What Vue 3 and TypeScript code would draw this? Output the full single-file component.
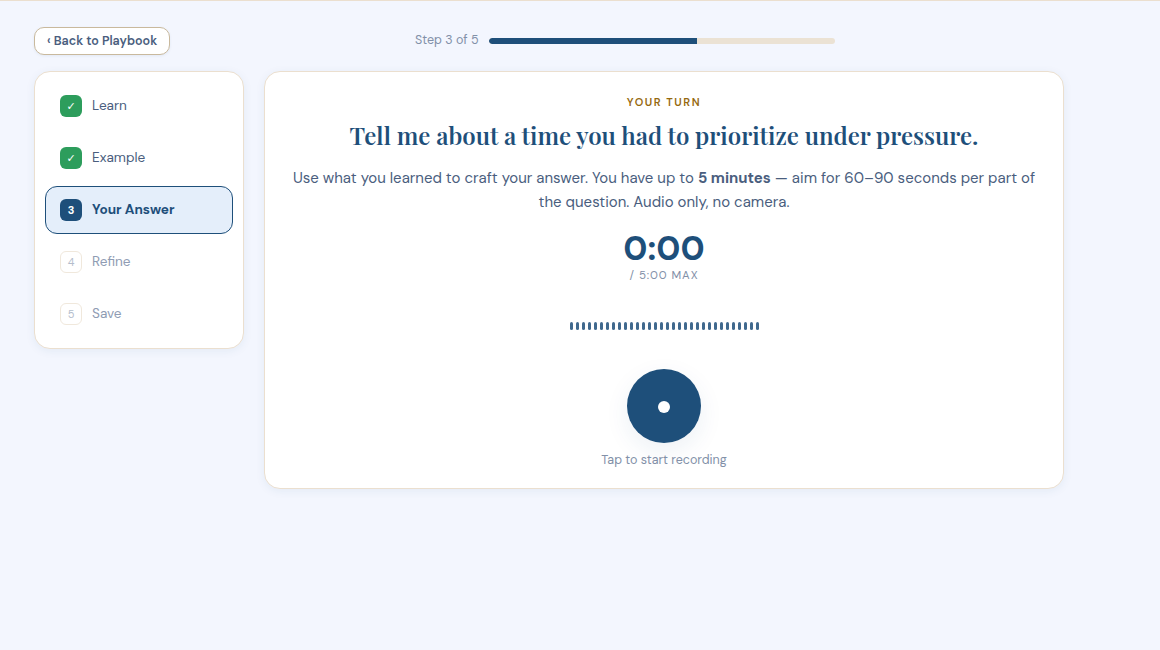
<script setup lang="ts">
interface Step { n: string; label: string; state: 'done' | 'active' | 'todo' }
const steps: Step[] = [
  { n: '✓', label: 'Learn', state: 'done' },
  { n: '✓', label: 'Example', state: 'done' },
  { n: '3', label: 'Your Answer', state: 'active' },
  { n: '4', label: 'Refine', state: 'todo' },
  { n: '5', label: 'Save', state: 'todo' },
]
const bars: number[] = Array.from({ length: 32 }, (_, i) => i)
</script>

<template>
  <div class="page">
    <header class="top">
      <button class="back">‹ Back to Playbook</button>
      <div class="progress">
        <span class="step-text">Step 3 of 5</span>
        <div class="track"><div class="fill"></div></div>
      </div>
    </header>
    <div class="columns">
      <nav class="side">
        <div v-for="s in steps" :key="s.label" class="row" :class="s.state">
          <span class="badge">{{ s.n }}</span>
          <span class="label">{{ s.label }}</span>
        </div>
      </nav>
      <main class="card">
        <div class="eyebrow">YOUR TURN</div>
        <h1 class="title">Tell me about a time you had to prioritize under pressure.</h1>
        <p class="desc">Use what you learned to craft your answer. You have up to <strong>5 minutes</strong> — aim for 60–90 seconds per part of the question. Audio only, no camera.</p>
        <div class="timer">0:00</div>
        <div class="max">/ 5:00 MAX</div>
        <div class="wave"><span v-for="b in bars" :key="b" class="bar"></span></div>
        <button class="rec"><span class="dot"></span></button>
        <div class="hint">Tap to start recording</div>
      </main>
    </div>
  </div>
</template>

<style>
html, body { margin: 0; background: #f3f6fe; }
</style>

<style scoped>
.page {
  min-height: 650px;
  box-sizing: border-box;
  background: #f3f6fe;
  border-top: 1px solid #ebdfcf;
  padding: 26px 34px 0;
  font-family: "DM Sans", Inter, "Liberation Sans", sans-serif;
  color: #4a5e7e;
}
.top { display: flex; align-items: center; height: 28px; }
.back {
  box-sizing: border-box;
  width: 136px;
  height: 28px;
  padding: 0;
  background: #fff;
  border: 1px solid #c9b99d;
  border-radius: 10px;
  font: 600 12.5px "DM Sans", Inter, "Liberation Sans", sans-serif;
  color: #4a5e7e;
  white-space: nowrap;
  box-shadow: 0 1px 3px rgba(30, 79, 122, 0.08);
}
.progress { display: flex; align-items: center; gap: 10px; margin-left: 245px; }
.step-text { font-size: 12.5px; line-height: 16px; color: #8290a8; white-space: nowrap; margin-top: -2px; }
.track { width: 346px; height: 6px; border-radius: 3px; background: #ebe2d4; overflow: hidden; }
.fill { width: 208px; height: 100%; background: #1e4f7a; border-radius: 3px 0 0 3px; }
.columns { display: flex; align-items: flex-start; gap: 20px; margin-top: 16px; }
.side {
  box-sizing: border-box;
  width: 210px;
  padding: 10px;
  display: flex;
  flex-direction: column;
  gap: 4px;
  background: #fff;
  border: 1px solid #ebdfcf;
  border-radius: 16px;
  box-shadow: 0 2px 10px rgba(30, 79, 122, 0.07);
}
.row {
  box-sizing: border-box;
  height: 48px;
  display: flex;
  align-items: center;
  gap: 10px;
  padding: 0 14px;
  border: 1px solid transparent;
  border-radius: 12px;
  font-size: 13.6px;
}
.label { margin-top: -2px; }
.badge {
  box-sizing: border-box;
  width: 22px;
  height: 22px;
  display: flex;
  align-items: center;
  justify-content: center;
  border-radius: 6px;
  font-size: 11px;
  font-weight: 700;
}
.done .badge { background: #2d9d5c; color: #fff; font-weight: 400; font-family: "DejaVu Sans", sans-serif; }
.active { background: #e4eefa; border-color: #1e4f7a; color: #1e4f7a; font-weight: 700; }
.active .badge { background: #1e4f7a; color: #fff; }
.todo { color: #8f9cb3; }
.todo .badge { background: #fff; border: 1px solid #f0e8dc; color: #b4bdcc; font-weight: 400; }
.card {
  box-sizing: border-box;
  width: 800px;
  height: 418px;
  padding: 23px 24px 0;
  display: flex;
  flex-direction: column;
  align-items: center;
  text-align: center;
  background: #fff;
  border: 1px solid #ebdfcf;
  border-radius: 16px;
  box-shadow: 0 2px 10px rgba(30, 79, 122, 0.07);
}
.eyebrow { font-size: 11px; font-weight: 600; letter-spacing: 1.54px; line-height: 14px; color: #96690f; }
.title {
  margin: 8px 0 0;
  font: 600 24px/36px "Playfair Display", "Liberation Serif", serif;
  color: #1e4f7a;
}
.desc { margin: 13px 0 0; font-size: 15px; line-height: 24px; color: #4a5e7e; }
.desc strong { font-weight: 700; }
.timer { margin-top: 15px; font-size: 34.4px; font-weight: 700; line-height: 40px; color: #1e4f7a; }
.max { font-size: 11.5px; letter-spacing: 0.9px; line-height: 14px; color: #8290a8; }
.wave { display: flex; gap: 3px; margin-top: 39px; }
.bar { width: 3px; height: 8px; border-radius: 1.5px; background: #1e4f7a; opacity: 0.85; }
.rec {
  width: 74px;
  height: 74px;
  margin-top: 39px;
  padding: 0;
  border: 0;
  border-radius: 50%;
  background: #1e4f7a;
  display: flex;
  align-items: center;
  justify-content: center;
  box-shadow: 0 8px 24px rgba(30, 79, 122, 0.08);
}
.dot { width: 12px; height: 12px; margin-top: 2px; border-radius: 50%; background: #fff; }
.hint { margin-top: 8px; font-size: 12.5px; line-height: 18px; color: #8290a8; }
</style>
